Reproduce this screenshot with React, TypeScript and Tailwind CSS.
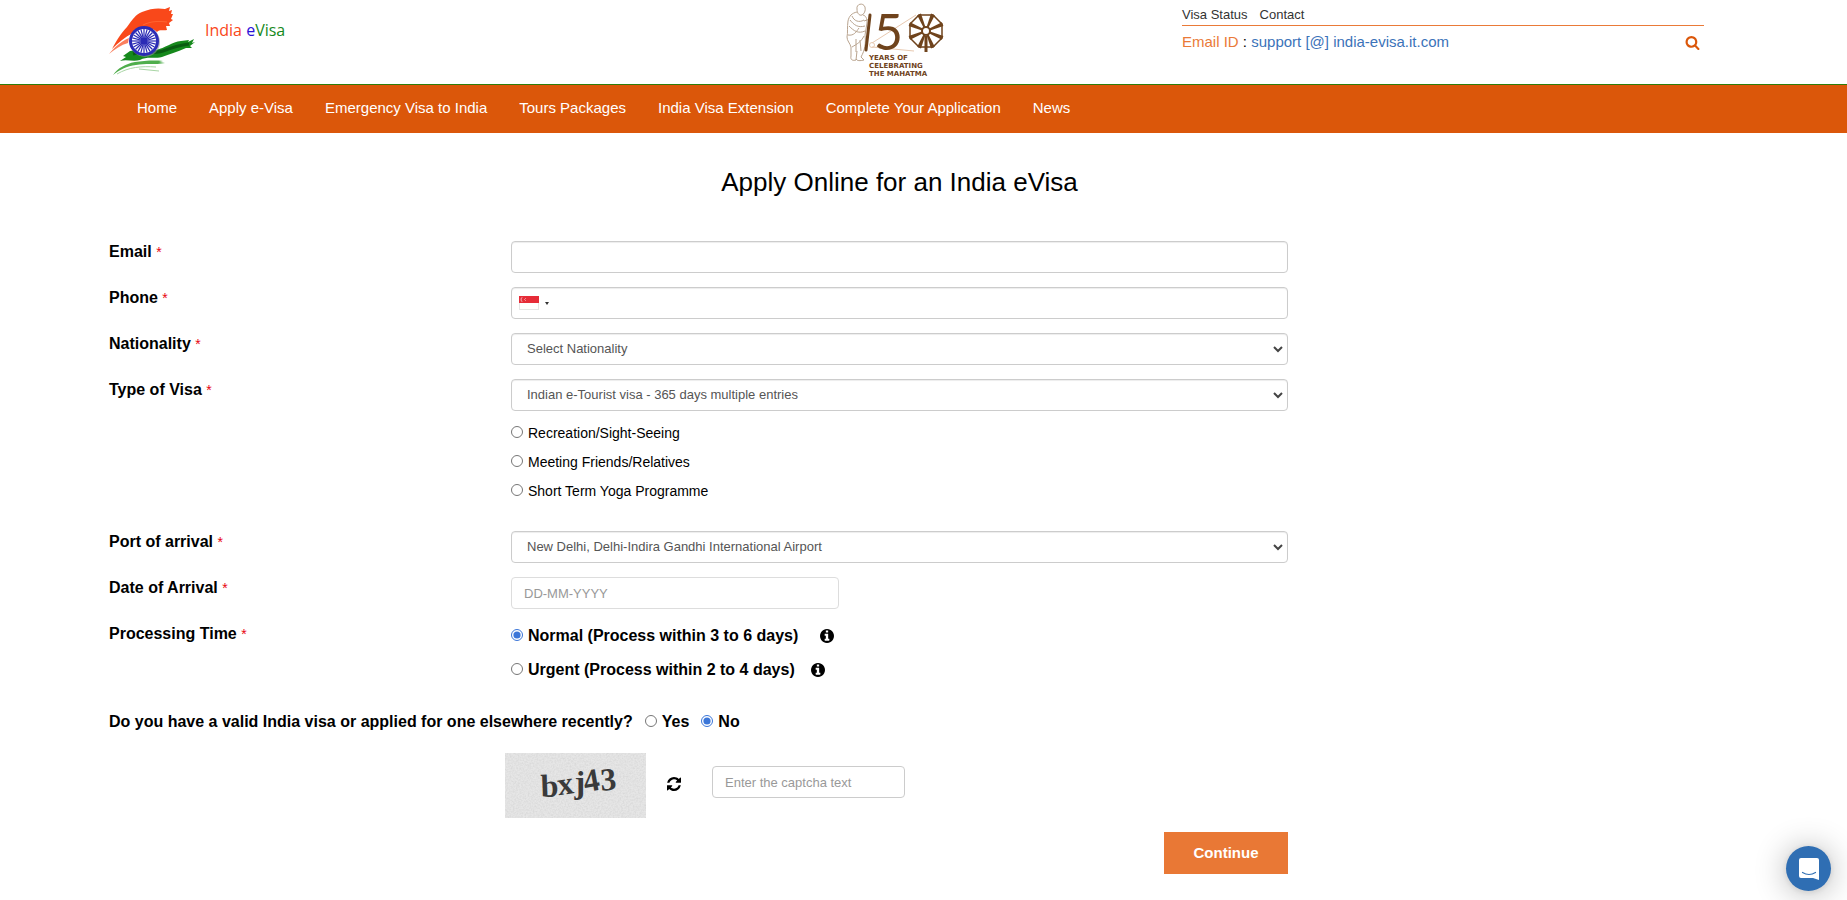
import type { ReactNode } from "react";

interface NavLink {
  label: string;
  href: string;
}

const navLinks: NavLink[] = [
  { label: "Home", href: "#home" },
  { label: "Apply e-Visa", href: "#apply" },
  { label: "Emergency Visa to India", href: "#emergency" },
  { label: "Tours Packages", href: "#tours" },
  { label: "India Visa Extension", href: "#extension" },
  { label: "Complete Your Application", href: "#complete" },
  { label: "News", href: "#news" },
];

const purposes = ["Recreation/Sight-Seeing", "Meeting Friends/Relatives", "Short Term Yoga Programme"];

const inputClass =
  "block h-8 w-full rounded border border-[#ccc] bg-white px-3 text-[13px] text-[#555] shadow-[inset_0_1px_1px_rgba(0,0,0,0.075)] outline-none placeholder:text-[#999]";

/* 24 spokes of the chakra */
const spokes = Array.from({ length: 24 }, (_, i) => i * 15);

/* 8 arms of the spinning wheel */
const arms = Array.from({ length: 8 }, (_, i) => i * 45 + 22.5);

const FlagLogo = () => (
  <svg width="92" height="78" viewBox="0 0 92 78" aria-hidden="true">
    {/* Saffron stroke */}
    <path
      d="M3 49 C7 42 11 34 18 27 C23 20 27 14 33 12 C42 8 50 8 56 9 L61 7 L60 11 L63 10 L62 14 L64 14 L62 19 L64 20 L60 23 L61 26 L57 26 L58 30 C54 31 51 29 48 32 C42 26 32 28 24 33 C16 37 9 43 3 49 Z"
      fill="#f9481a"
    />
    <path d="M0 54 C5 48 11 42 20 38 L19 43 C12 45 6 49 0 54 Z" fill="#f9481a" opacity="0.7" />
    <path d="M34 25 C42 21 50 21 58 22" stroke="#ff6431" strokeWidth="1" fill="none" />
    {/* Green strokes */}
    <path
      d="M11 61 L17 57 L14 56 L21 51 C28 49 38 52 47 50 C56 48 63 42 72 41 L80 40 L79 42 L85 39 L83 43 L86 42 L81 46 L83 48 L77 48 C68 52 60 54 53 57 C44 59 38 56 31 60 C24 62 18 59 11 61 Z"
      fill="#16891c"
    />
    <path d="M24 54 C34 51 44 54 54 51 C64 47 72 45 80 44" stroke="#0a5c12" strokeWidth="3" fill="none" />
    <path d="M4 75 C9 68 16 64 26 62 C34 61 44 60 54 61 L50 62 L56 63 C46 65 36 63 27 65 C18 66 10 70 4 75 Z" fill="#4fae4c" />
    <path d="M8 74 C20 67 32 66 47 67 M30 69 L50 71" stroke="#a8d5a4" strokeWidth="1" fill="none" />
    {/* Chakra */}
    <circle cx="36" cy="42" r="15" fill="#8f8f9f" opacity="0.6" />
    <circle cx="35" cy="41" r="15" fill="#2b2bb5" />
    <circle cx="35" cy="41" r="12" fill="#fff" />
    {spokes.map((angle) => (
      <line
        key={angle}
        x1="35"
        y1="41"
        x2="35"
        y2="29"
        stroke="#2b2bb5"
        strokeWidth="1.2"
        transform={`rotate(${angle} 35 41)`}
      />
    ))}
    <circle cx="35" cy="41" r="3" fill="#2b2bb5" />
  </svg>
);

const MahatmaLogo = () => (
  <svg width="106" height="80" viewBox="0 0 106 80" role="img" aria-label="150 years of celebrating the Mahatma">
    {/* Walking figure */}
    <g fill="none" stroke="#b9a48f" strokeWidth="1">
      <path d="M11 9 C10 4 17 2 19 7 C20 11 18 14 16 15 C13 16 11 13 11 9 Z" />
      <path d="M11 12 C6 13 3 16 2 21 C1 27 2 33 1 37 C1 41 4 43 5 47 L5 56 C4 60 7 61 10 60 L11 51" />
      <path d="M17 15 C20 16 21 18 21 23 L19 35 C20 43 19 50 15 57 L18 60 C14 61 11 61 10 59" />
      <path d="M4 20 C8 25 12 28 19 26 M3 26 C8 31 12 34 19 31 M6 16 C8 21 13 23 18 20 M2 35 C8 36 10 32 13 28 M6 47 C11 44 15 42 18 36 M10 39 L10 52 M14 40 L15 51" />
      <path d="M18 21 L24 19" />
    </g>
    {/* Thread running from the spindle to the wheel */}
    <path d="M26 43 L70 15 M26 47 L68 51" stroke="#e8c9b0" strokeWidth="1" fill="none" />
    <circle cx="26" cy="45" r="2.5" fill="none" stroke="#e8c9b0" strokeWidth="1" />
    {/* Staff */}
    <path d="M24 15 L20 50" stroke="#6f431c" strokeWidth="3" strokeLinecap="round" />
    <text x="28" y="50" fill="#6f431c" fontFamily="Lato, sans-serif" fontSize="50">
      5
    </text>
    {/* Spinning wheel */}
    <path d="M73 15 L87 15 L96 24 L96 38 L87 47 L73 47 L64 38 L64 24 Z" stroke="#6f431c" strokeWidth="1.5" fill="none" />
    <circle cx="80" cy="31" r="4" fill="none" stroke="#6f431c" strokeWidth="2" />
    {arms.map((angle) => (
      <path key={angle} d="M79 27 L78 13 L82 13 L81 27 Z" fill="#6f431c" transform={`rotate(${angle} 80 31)`} />
    ))}
    <path d="M80 36 L80 52" stroke="#6f431c" strokeWidth="3" />
    <g fill="#6f431c" fontFamily="'DejaVu Sans', sans-serif" fontSize="7" fontWeight="700">
      <text x="23" y="60">YEARS OF</text>
      <text x="23" y="68">CELEBRATING</text>
      <text x="23" y="76">THE MAHATMA</text>
    </g>
  </svg>
);

const SearchIcon = () => (
  <svg width="15" height="15" viewBox="0 0 1792 1792" fill="currentColor" aria-hidden="true">
    <path d="M1216 832q0-185-131.5-316.5t-316.5-131.5-316.5 131.5-131.5 316.5 131.5 316.5 316.5 131.5 316.5-131.5 131.5-316.5zm512 832q0 52-38 90t-90 38q-54 0-90-38l-343-342q-179 124-399 124-143 0-273.5-55.5t-225-150-150-225-55.5-273.5 55.5-273.5 150-225 225-150 273.5-55.5 273.5 55.5 225 150 150 225 55.5 273.5q0 220-124 399l343 343q37 37 37 90z" />
  </svg>
);

const InfoIcon = () => (
  <svg width="14" height="14" viewBox="128 128 1536 1536" fill="currentColor" aria-hidden="true">
    <path d="M1152 1376v-160q0-14-9-23t-23-9h-96v-512q0-14-9-23t-23-9h-320q-14 0-23 9t-9 23v160q0 14 9 23t23 9h96v320h-96q-14 0-23 9t-9 23v160q0 14 9 23t23 9h448q14 0 23-9t9-23zm-128-896v-160q0-14-9-23t-23-9h-192q-14 0-23 9t-9 23v160q0 14 9 23t23 9h192q14 0 23-9t9-23zm640 416q0 209-103 385.5t-279.5 279.5-385.5 103-385.5-103-279.5-279.5-103-385.5 103-385.5 279.5-279.5 385.5-103 385.5 103 279.5 279.5 103 385.5z" />
  </svg>
);

const RefreshIcon = () => (
  <svg width="14" height="14" viewBox="0 0 1536 1536" fill="currentColor" aria-hidden="true">
    <path d="M1511 928q0 5-1 7-64 268-268 434.5t-478 166.5q-146 0-282.5-55t-243.5-157l-129 129q-19 19-45 19t-45-19-19-45v-448q0-26 19-45t45-19h448q26 0 45 19t19 45-19 45l-137 137q71 66 161 102t187 36q134 0 250-65t186-179q11-17 53-117 8-23 30-23h192q13 0 22.5 9.5t9.5 22.5zm25-800v448q0 26-19 45t-45 19h-448q-26 0-45-19t-19-45 19-45l138-138q-148-137-349-137-134 0-250 65t-186 179q-11 17-53 117-8 23-30 23h-199q-13 0-22.5-9.5t-9.5-22.5v-7q65-268 270-434.5t480-166.5q146 0 284 55.5t245 156.5l130-129q19-19 45-19t45 19 19 45z" />
  </svg>
);

const Captcha = () => (
  <svg width="141" height="65" viewBox="0 0 141 65" role="img" aria-label="Captcha">
    <defs>
      <filter id="grain" x="0" y="0" width="100%" height="100%">
        <feTurbulence type="fractalNoise" baseFrequency="0.6" numOctaves="2" />
        <feColorMatrix values="0 0 0 0 0.5  0 0 0 0 0.5  0 0 0 0 0.5  0.6 0 0 0 -0.2" />
      </filter>
    </defs>
    <rect width="141" height="65" fill="#e6e6e6" />
    <rect width="141" height="65" filter="url(#grain)" />
    <text
      x="36"
      y="44"
      fill="#3a3a3a"
      fontFamily="'Liberation Serif', serif"
      fontSize="32"
      fontWeight="700"
      rotate="4 -2 6 -4 2"
      transform="rotate(-6 36 44)"
    >
      bxj43
    </text>
  </svg>
);

interface FieldProps {
  label: string;
  htmlFor?: string;
  children: ReactNode;
}

const Field = ({ label, htmlFor, children }: FieldProps) => (
  <div className="grid grid-cols-4">
    <div className="pt-px text-base leading-5 font-bold text-black">
      <label htmlFor={htmlFor}>{label}</label>{" "}
      <span className="text-sm leading-5 font-normal text-red-600">*</span>
    </div>
    <div className="col-span-2 pr-[27px]">{children}</div>
  </div>
);

interface SelectProps {
  id: string;
  options: string[];
}

const Select = ({ id, options }: SelectProps) => (
  <div className="relative">
    <select id={id} className={`${inputClass} appearance-none pl-[15px]`}>
      {options.map((option) => (
        <option key={option}>{option}</option>
      ))}
    </select>
    <svg
      className="pointer-events-none absolute top-3 right-1"
      width="12"
      height="8"
      viewBox="0 0 12 8"
      fill="none"
      stroke="#444"
      strokeWidth="2"
      aria-hidden="true"
    >
      <path d="M2 2 L6 6 L10 2" />
    </svg>
  </div>
);

interface RadioProps {
  name: string;
  label: string;
  defaultChecked?: boolean;
}

const Radio = ({ name, label, defaultChecked }: RadioProps) => (
  <label className="flex items-center gap-[5px]">
    <input type="radio" name={name} defaultChecked={defaultChecked} className="mb-0.5 h-3 w-3 accent-[#3b76d8]" />
    {label}
  </label>
);

export default function App() {
  return (
    <div className="min-h-screen bg-white font-['Liberation_Sans',Arial,sans-serif] text-black">
      <header className="flex h-[84px] pl-[109px]">
        <a href="#home" className="flex flex-1 items-start gap-1">
          <FlagLogo />
          <span className="pt-4 font-['Open_Sans',sans-serif] text-base leading-7 text-[#f9481a]">
            India <span className="text-[#2a10d8]">e</span>
            <span className="text-[#16891c]">Visa</span>
          </span>
        </a>
        <div className="flex w-[336px] shrink-0">
          <MahatmaLogo />
        </div>
        <div className="mr-[143px] w-[522px] shrink-0">
          <nav className="flex gap-3 border-b border-[#ea7a38] pt-[5px] text-[13px] leading-5 text-[#333]">
            <a href="#status">Visa Status</a>
            <a href="#contact">Contact</a>
          </nav>
          <div className="flex items-center justify-between pt-1.5 pr-1 text-[15px] leading-5">
            <p>
              <span className="text-[#ea7a38]">Email ID</span> :{" "}
              <a href="#support" className="text-[#3b73b9]">support [@] india-evisa.it.com</a>
            </p>
            <button type="button" aria-label="Search" className="text-[#db570a]">
              <SearchIcon />
            </button>
          </div>
        </div>
      </header>

      <nav className="flex h-[49px] gap-8 border-t border-[#2f7d0b] bg-[#db570a] pt-[11px] pl-[137px] text-[15px] leading-6 text-white">
        {navLinks.map((link) => (
          <a key={link.label} href={link.href}>{link.label}</a>
        ))}
      </nav>

      <main className="mr-[130px] ml-[109px]">
        <h1 className="pt-[31px] pr-[27px] text-center text-[26px] leading-9">Apply Online for an India eVisa</h1>

        <form className="mt-[41px]">
          <div className="flex flex-col gap-3.5">
            <Field label="Email" htmlFor="email">
              <input id="email" type="email" className={inputClass} />
            </Field>

            <Field label="Phone" htmlFor="phone">
              <div className="relative">
                <input id="phone" type="tel" className={`${inputClass} pl-12`} />
                <button
                  type="button"
                  aria-label="Country code"
                  className="absolute top-0 left-0 flex h-8 items-center gap-1.5 px-2"
                >
                  <svg width="20" height="14" viewBox="0 0 20 14" aria-hidden="true">
                    <rect x="0.5" y="0.5" width="19" height="13" fill="#fff" stroke="#e5e5e5" />
                    <rect width="20" height="7" fill="#e62c38" />
                    <path d="M4 1 A2.5 2.5 0 1 0 4 6 A3 3 0 0 1 4 1 Z" fill="#f0a0a5" />
                    <path d="M5 3h1v1h-1z M6 2h1v1h-1z M6 4h1v1h-1z" fill="#f08a90" />
                  </svg>
                  <svg width="4" height="3" viewBox="0 0 4 3" aria-hidden="true">
                    <path d="M0 0h4L2 3z" fill="#333" />
                  </svg>
                </button>
              </div>
            </Field>

            <Field label="Nationality" htmlFor="nationality">
              <Select id="nationality" options={["Select Nationality"]} />
            </Field>

            <Field label="Type of Visa" htmlFor="visa-type">
              <Select id="visa-type" options={["Indian e-Tourist visa - 365 days multiple entries"]} />
              <div className="flex flex-col gap-[9px] pt-3 pb-4 text-sm leading-5">
                {purposes.map((purpose) => (
                  <Radio key={purpose} name="purpose" label={purpose} />
                ))}
              </div>
            </Field>

            <Field label="Port of arrival" htmlFor="port">
              <Select id="port" options={["New Delhi, Delhi-Indira Gandhi International Airport"]} />
            </Field>

            <Field label="Date of Arrival" htmlFor="arrival-date">
              <input
                id="arrival-date"
                type="text"
                placeholder="DD-MM-YYYY"
                className="block h-8 w-[328px] rounded border border-[#ddd] bg-white px-3 text-[13px] text-[#555] outline-none placeholder:text-[#999]"
              />
            </Field>

            <Field label="Processing Time">
              <div className="flex flex-col gap-3.5 pt-[3px] text-base leading-5 font-bold">
                <div className="flex items-center gap-[22px]">
                  <Radio name="processing" label="Normal (Process within 3 to 6 days)" defaultChecked />
                  <InfoIcon />
                </div>
                <div className="flex items-center gap-4">
                  <Radio name="processing" label="Urgent (Process within 2 to 4 days)" />
                  <InfoIcon />
                </div>
              </div>
            </Field>
          </div>

          <fieldset className="mt-8 flex items-center gap-3 text-base leading-5 font-bold">
            <legend className="float-left">Do you have a valid India visa or applied for one elsewhere recently?</legend>
            <Radio name="valid-visa" label="Yes" />
            <Radio name="valid-visa" label="No" defaultChecked />
          </fieldset>

          <div className="mt-[21px] grid grid-cols-4">
            <div className="col-span-2 col-start-2 -ml-1.5 flex items-start">
              <Captcha />
              <button type="button" aria-label="Reload captcha" className="mt-6 ml-[21px]">
                <RefreshIcon />
              </button>
              <input
                type="text"
                aria-label="Captcha text"
                placeholder="Enter the captcha text"
                className="mt-[13px] ml-[31px] block h-8 w-[193px] rounded border border-[#ccc] bg-white px-3 text-[13px] text-[#555] outline-none placeholder:text-[#999]"
              />
            </div>
            <div className="col-span-2 col-start-2 flex justify-end pt-3.5 pr-[27px] pb-6">
              <button type="submit" className="h-[42px] w-[124px] bg-[#e97835] text-[15px] font-bold text-white">
                Continue
              </button>
            </div>
          </div>
        </form>
      </main>

      {/* Chat launcher */}
      <button
        type="button"
        aria-label="Open chat"
        className="fixed right-4 bottom-[9px] flex h-[45px] w-[45px] items-center justify-center rounded-full bg-[#2f6eb3] shadow-[0_1px_6px_rgba(0,0,0,0.1),0_2px_32px_rgba(0,0,0,0.3)]"
      >
        <svg width="20" height="22" viewBox="0 0 20 22" aria-hidden="true">
          <path d="M2 0 H18 Q20 0 20 2 V22 L14 20 H2 Q0 20 0 18 V2 Q0 0 2 0 Z" fill="#fff" />
          <path d="M3.5 14.5 Q10 18.5 16.5 14.5" fill="none" stroke="#2f6eb3" strokeWidth="1.2" strokeLinecap="round" />
        </svg>
      </button>
    </div>
  );
}
